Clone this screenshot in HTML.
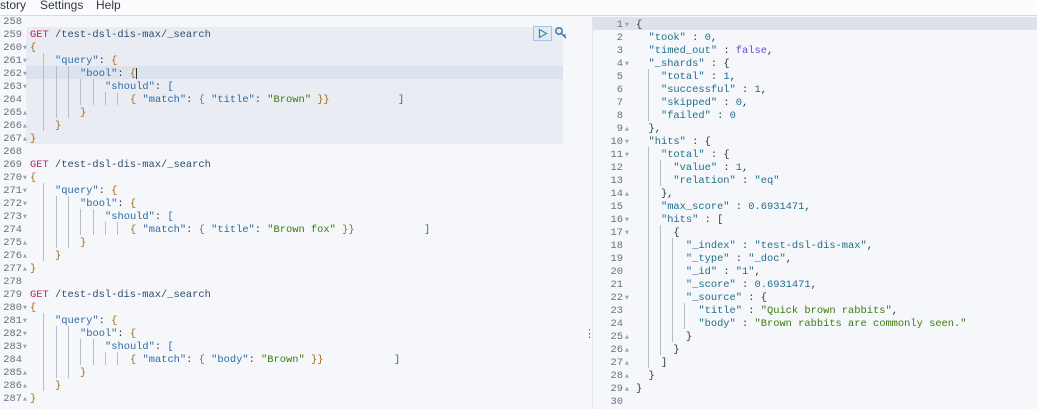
<!DOCTYPE html>
<html><head><meta charset="utf-8"><style>
*{margin:0;padding:0;box-sizing:border-box}
body{width:1037px;height:409px;overflow:hidden;background:#f5f7fa;position:relative;font-family:"Liberation Mono","DejaVu Sans Mono",monospace;font-size:10.4px;color:#343741}
.top{position:absolute;left:0;top:0;width:1037px;height:16px;background:#fbfcfd;border-bottom:1px solid #d3dae6;font-family:"Liberation Sans",sans-serif;font-size:12px;color:#343741}
.top span{position:absolute;top:-2px}
.l{position:absolute;height:13px;line-height:13px;white-space:pre;margin-top:2px}
.n{position:absolute;height:13px;line-height:13px;text-align:right;color:#69707d;margin-top:2px}
.f{position:absolute;font-size:5px;color:#98a2b3;line-height:13px;height:13px;margin-top:2px;font-family:"DejaVu Sans",sans-serif}
.gv{position:absolute;width:1px;background:#b5bdc9}
.g{color:#c41a6b}.p{color:#2f4b6b}.k{color:#2f6aa8}.s{color:#3a7d0a}.b{color:#a66a1f}
.rk{color:#1f6e8c}.rp{color:#343741}.rf{color:#6b48d1}
</style></head><body>
<div class="top"><span style="left:0">story</span><span style="left:40px">Settings</span><span style="left:96px">Help</span></div>
<div style="position:absolute;left:26px;top:27px;width:537px;height:117px;background:#e9edf3"></div>
<div style="position:absolute;left:26px;top:66px;width:537px;height:13px;background:#dde3ec"></div>
<div style="position:absolute;left:580px;top:17px;width:12px;height:392px;background:#f7f8fb"></div>
<div style="position:absolute;left:592px;top:17px;width:1px;height:392px;background:#e0e5ee"></div>
<div style="position:absolute;left:584px;top:327px;font-family:'DejaVu Sans';font-size:11px;color:#555">⋮</div>
<div style="position:absolute;left:593px;top:17px;width:444px;height:13px;background:#dde2ea"></div>
<div style="position:absolute;left:533px;top:26px;width:19px;height:15px;border:1px solid #a9c1df;background:#e2eaf5"></div>
<svg style="position:absolute;left:538px;top:28px" width="10" height="11"><path d="M1.5 1.5 L8.5 5.5 L1.5 9.5Z" fill="none" stroke="#3f8f9a" stroke-width="1.2"/></svg>
<svg style="position:absolute;left:554px;top:26px" width="14" height="14"><circle cx="5" cy="5" r="3.2" fill="none" stroke="#2f6aa8" stroke-width="1.3"/><path d="M7.3 7.3 L12 12 M10 10 L11.5 8.5" stroke="#2f6aa8" stroke-width="1.3" fill="none"/></svg>

<div class="n" style="left:0;top:14px;width:22px">258</div>
<div class="n" style="left:0;top:27px;width:22px">259</div>
<div class="n" style="left:0;top:40px;width:22px">260</div><div class="f" style="left:23px;top:40px">▼</div>
<div class="n" style="left:0;top:53px;width:22px">261</div><div class="f" style="left:23px;top:53px">▼</div>
<div class="n" style="left:0;top:66px;width:22px">262</div><div class="f" style="left:23px;top:66px">▼</div>
<div class="n" style="left:0;top:79px;width:22px">263</div><div class="f" style="left:23px;top:79px">▼</div>
<div class="n" style="left:0;top:92px;width:22px">264</div>
<div class="n" style="left:0;top:105px;width:22px">265</div><div class="f" style="left:23px;top:105px">▲</div>
<div class="n" style="left:0;top:118px;width:22px">266</div><div class="f" style="left:23px;top:118px">▲</div>
<div class="n" style="left:0;top:131px;width:22px">267</div><div class="f" style="left:23px;top:131px">▲</div>
<div class="n" style="left:0;top:144px;width:22px">268</div>
<div class="n" style="left:0;top:157px;width:22px">269</div>
<div class="n" style="left:0;top:170px;width:22px">270</div><div class="f" style="left:23px;top:170px">▼</div>
<div class="n" style="left:0;top:183px;width:22px">271</div><div class="f" style="left:23px;top:183px">▼</div>
<div class="n" style="left:0;top:196px;width:22px">272</div><div class="f" style="left:23px;top:196px">▼</div>
<div class="n" style="left:0;top:209px;width:22px">273</div><div class="f" style="left:23px;top:209px">▼</div>
<div class="n" style="left:0;top:222px;width:22px">274</div>
<div class="n" style="left:0;top:235px;width:22px">275</div><div class="f" style="left:23px;top:235px">▲</div>
<div class="n" style="left:0;top:248px;width:22px">276</div><div class="f" style="left:23px;top:248px">▲</div>
<div class="n" style="left:0;top:261px;width:22px">277</div><div class="f" style="left:23px;top:261px">▲</div>
<div class="n" style="left:0;top:274px;width:22px">278</div>
<div class="n" style="left:0;top:287px;width:22px">279</div>
<div class="n" style="left:0;top:300px;width:22px">280</div><div class="f" style="left:23px;top:300px">▼</div>
<div class="n" style="left:0;top:313px;width:22px">281</div><div class="f" style="left:23px;top:313px">▼</div>
<div class="n" style="left:0;top:326px;width:22px">282</div><div class="f" style="left:23px;top:326px">▼</div>
<div class="n" style="left:0;top:339px;width:22px">283</div><div class="f" style="left:23px;top:339px">▼</div>
<div class="n" style="left:0;top:352px;width:22px">284</div>
<div class="n" style="left:0;top:365px;width:22px">285</div><div class="f" style="left:23px;top:365px">▲</div>
<div class="n" style="left:0;top:378px;width:22px">286</div><div class="f" style="left:23px;top:378px">▲</div>
<div class="n" style="left:0;top:391px;width:22px">287</div><div class="f" style="left:23px;top:391px">▲</div>

<div class="gv" style="left:43px;top:53px;height:78px"></div>
<div class="gv" style="left:56px;top:66px;height:52px"></div><div class="gv" style="left:68px;top:66px;height:52px"></div>
<div class="gv" style="left:80px;top:79px;height:26px"></div><div class="gv" style="left:93px;top:79px;height:26px"></div>
<div class="gv" style="left:105px;top:92px;height:13px"></div><div class="gv" style="left:117px;top:92px;height:13px"></div>
<div class="gv" style="left:43px;top:183px;height:78px"></div>
<div class="gv" style="left:56px;top:196px;height:52px"></div><div class="gv" style="left:68px;top:196px;height:52px"></div>
<div class="gv" style="left:80px;top:209px;height:26px"></div><div class="gv" style="left:93px;top:209px;height:26px"></div>
<div class="gv" style="left:105px;top:222px;height:13px"></div><div class="gv" style="left:117px;top:222px;height:13px"></div>
<div class="gv" style="left:43px;top:313px;height:78px"></div>
<div class="gv" style="left:56px;top:326px;height:52px"></div><div class="gv" style="left:68px;top:326px;height:52px"></div>
<div class="gv" style="left:80px;top:339px;height:26px"></div><div class="gv" style="left:93px;top:339px;height:26px"></div>
<div class="gv" style="left:105px;top:352px;height:13px"></div><div class="gv" style="left:117px;top:352px;height:13px"></div>

<div class="l" style="left:30px;top:27px"><span class="g">GET</span> <span class="p">/test-dsl-dis-max/_search</span></div>
<div class="l b" style="left:30px;top:40px">{</div>
<div class="l" style="left:55px;top:53px"><span class="k">"query"</span>: <span class="b">{</span></div>
<div class="l" style="left:80px;top:66px"><span class="k">"bool"</span>: <span class="b">{</span></div>
<div style="position:absolute;left:136px;top:68px;width:1px;height:11px;background:#333"></div>
<div class="l" style="left:105px;top:79px"><span class="k">"should"</span>: <span class="k">[</span></div>
<div class="l" style="left:130px;top:92px"><span class="b">{</span> <span class="k">"match"</span>: <span class="b">{</span> <span class="k">"title"</span>: <span class="s">"Brown"</span> <span class="b">}}</span></div>
<div class="l k" style="left:398px;top:92px">]</div>
<div class="l b" style="left:80px;top:105px">}</div>
<div class="l b" style="left:55px;top:118px">}</div>
<div class="l b" style="left:30px;top:131px">}</div>

<div class="l" style="left:30px;top:157px"><span class="g">GET</span> <span class="p">/test-dsl-dis-max/_search</span></div>
<div class="l b" style="left:30px;top:170px">{</div>
<div class="l" style="left:55px;top:183px"><span class="k">"query"</span>: <span class="b">{</span></div>
<div class="l" style="left:80px;top:196px"><span class="k">"bool"</span>: <span class="b">{</span></div>
<div class="l" style="left:105px;top:209px"><span class="k">"should"</span>: <span class="k">[</span></div>
<div class="l" style="left:130px;top:222px"><span class="b">{</span> <span class="k">"match"</span>: <span class="b">{</span> <span class="k">"title"</span>: <span class="s">"Brown fox"</span> <span class="b">}}</span></div>
<div class="l k" style="left:424px;top:222px">]</div>
<div class="l b" style="left:80px;top:235px">}</div>
<div class="l b" style="left:55px;top:248px">}</div>
<div class="l b" style="left:30px;top:261px">}</div>

<div class="l" style="left:30px;top:287px"><span class="g">GET</span> <span class="p">/test-dsl-dis-max/_search</span></div>
<div class="l b" style="left:30px;top:300px">{</div>
<div class="l" style="left:55px;top:313px"><span class="k">"query"</span>: <span class="b">{</span></div>
<div class="l" style="left:80px;top:326px"><span class="k">"bool"</span>: <span class="b">{</span></div>
<div class="l" style="left:105px;top:339px"><span class="k">"should"</span>: <span class="k">[</span></div>
<div class="l" style="left:130px;top:352px"><span class="b">{</span> <span class="k">"match"</span>: <span class="b">{</span> <span class="k">"body"</span>: <span class="s">"Brown"</span> <span class="b">}}</span></div>
<div class="l k" style="left:394px;top:352px">]</div>
<div class="l b" style="left:80px;top:365px">}</div>
<div class="l b" style="left:55px;top:378px">}</div>
<div class="l b" style="left:30px;top:391px">}</div>

<div class="n" style="left:600px;top:17px;width:23px">1</div><div class="f" style="left:625px;top:17px">▼</div>
<div class="n" style="left:600px;top:30px;width:23px">2</div>
<div class="n" style="left:600px;top:43px;width:23px">3</div>
<div class="n" style="left:600px;top:56px;width:23px">4</div><div class="f" style="left:625px;top:56px">▼</div>
<div class="n" style="left:600px;top:69px;width:23px">5</div>
<div class="n" style="left:600px;top:82px;width:23px">6</div>
<div class="n" style="left:600px;top:95px;width:23px">7</div>
<div class="n" style="left:600px;top:108px;width:23px">8</div>
<div class="n" style="left:600px;top:121px;width:23px">9</div><div class="f" style="left:625px;top:121px">▲</div>
<div class="n" style="left:600px;top:134px;width:23px">10</div><div class="f" style="left:625px;top:134px">▼</div>
<div class="n" style="left:600px;top:147px;width:23px">11</div><div class="f" style="left:625px;top:147px">▼</div>
<div class="n" style="left:600px;top:160px;width:23px">12</div>
<div class="n" style="left:600px;top:173px;width:23px">13</div>
<div class="n" style="left:600px;top:186px;width:23px">14</div><div class="f" style="left:625px;top:186px">▲</div>
<div class="n" style="left:600px;top:199px;width:23px">15</div>
<div class="n" style="left:600px;top:212px;width:23px">16</div><div class="f" style="left:625px;top:212px">▼</div>
<div class="n" style="left:600px;top:225px;width:23px">17</div><div class="f" style="left:625px;top:225px">▼</div>
<div class="n" style="left:600px;top:238px;width:23px">18</div>
<div class="n" style="left:600px;top:251px;width:23px">19</div>
<div class="n" style="left:600px;top:264px;width:23px">20</div>
<div class="n" style="left:600px;top:277px;width:23px">21</div>
<div class="n" style="left:600px;top:290px;width:23px">22</div><div class="f" style="left:625px;top:290px">▼</div>
<div class="n" style="left:600px;top:303px;width:23px">23</div>
<div class="n" style="left:600px;top:316px;width:23px">24</div>
<div class="n" style="left:600px;top:329px;width:23px">25</div><div class="f" style="left:625px;top:329px">▲</div>
<div class="n" style="left:600px;top:342px;width:23px">26</div><div class="f" style="left:625px;top:342px">▲</div>
<div class="n" style="left:600px;top:355px;width:23px">27</div><div class="f" style="left:625px;top:355px">▲</div>
<div class="n" style="left:600px;top:368px;width:23px">28</div><div class="f" style="left:625px;top:368px">▲</div>
<div class="n" style="left:600px;top:381px;width:23px">29</div><div class="f" style="left:625px;top:381px">▲</div>
<div class="n" style="left:600px;top:394px;width:23px">30</div>

<div class="gv" style="left:648px;top:69px;height:52px"></div>
<div class="gv" style="left:648px;top:147px;height:221px"></div>
<div class="gv" style="left:660px;top:160px;height:26px"></div>
<div class="gv" style="left:660px;top:225px;height:130px"></div>
<div class="gv" style="left:672px;top:238px;height:104px"></div>
<div class="gv" style="left:684px;top:303px;height:26px"></div>

<div class="l rp" style="left:636px;top:17px">{</div>
<div class="l rp" style="left:636px;top:30px">  <span class="rk">"took"</span> : <span class="rk">0</span>,</div>
<div class="l rp" style="left:636px;top:43px">  <span class="rk">"timed_out"</span> : <span class="rf">false</span>,</div>
<div class="l rp" style="left:636px;top:56px">  <span class="rk">"_shards"</span> : {</div>
<div class="l rp" style="left:636px;top:69px">    <span class="rk">"total"</span> : <span class="rk">1</span>,</div>
<div class="l rp" style="left:636px;top:82px">    <span class="rk">"successful"</span> : <span class="rk">1</span>,</div>
<div class="l rp" style="left:636px;top:95px">    <span class="rk">"skipped"</span> : <span class="rk">0</span>,</div>
<div class="l rp" style="left:636px;top:108px">    <span class="rk">"failed"</span> : <span class="rk">0</span></div>
<div class="l rp" style="left:636px;top:121px">  },</div>
<div class="l rp" style="left:636px;top:134px">  <span class="rk">"hits"</span> : {</div>
<div class="l rp" style="left:636px;top:147px">    <span class="rk">"total"</span> : {</div>
<div class="l rp" style="left:636px;top:160px">      <span class="rk">"value"</span> : <span class="rk">1</span>,</div>
<div class="l rp" style="left:636px;top:173px">      <span class="rk">"relation"</span> : <span class="rk">"eq"</span></div>
<div class="l rp" style="left:636px;top:186px">    },</div>
<div class="l rp" style="left:636px;top:199px">    <span class="rk">"max_score"</span> : <span class="rk">0.6931471</span>,</div>
<div class="l rp" style="left:636px;top:212px">    <span class="rk">"hits"</span> : [</div>
<div class="l rp" style="left:636px;top:225px">      {</div>
<div class="l rp" style="left:636px;top:238px">        <span class="rk">"_index"</span> : <span class="rk">"test-dsl-dis-max"</span>,</div>
<div class="l rp" style="left:636px;top:251px">        <span class="rk">"_type"</span> : <span class="rk">"_doc"</span>,</div>
<div class="l rp" style="left:636px;top:264px">        <span class="rk">"_id"</span> : <span class="rk">"1"</span>,</div>
<div class="l rp" style="left:636px;top:277px">        <span class="rk">"_score"</span> : <span class="rk">0.6931471</span>,</div>
<div class="l rp" style="left:636px;top:290px">        <span class="rk">"_source"</span> : {</div>
<div class="l rp" style="left:636px;top:303px">          <span class="rk">"title"</span> : <span class="s">"Quick brown rabbits"</span>,</div>
<div class="l rp" style="left:636px;top:316px">          <span class="rk">"body"</span> : <span class="s">"Brown rabbits are commonly seen."</span></div>
<div class="l rp" style="left:636px;top:329px">        }</div>
<div class="l rp" style="left:636px;top:342px">      }</div>
<div class="l rp" style="left:636px;top:355px">    ]</div>
<div class="l rp" style="left:636px;top:368px">  }</div>
<div class="l rp" style="left:636px;top:381px">}</div>
</body></html>
